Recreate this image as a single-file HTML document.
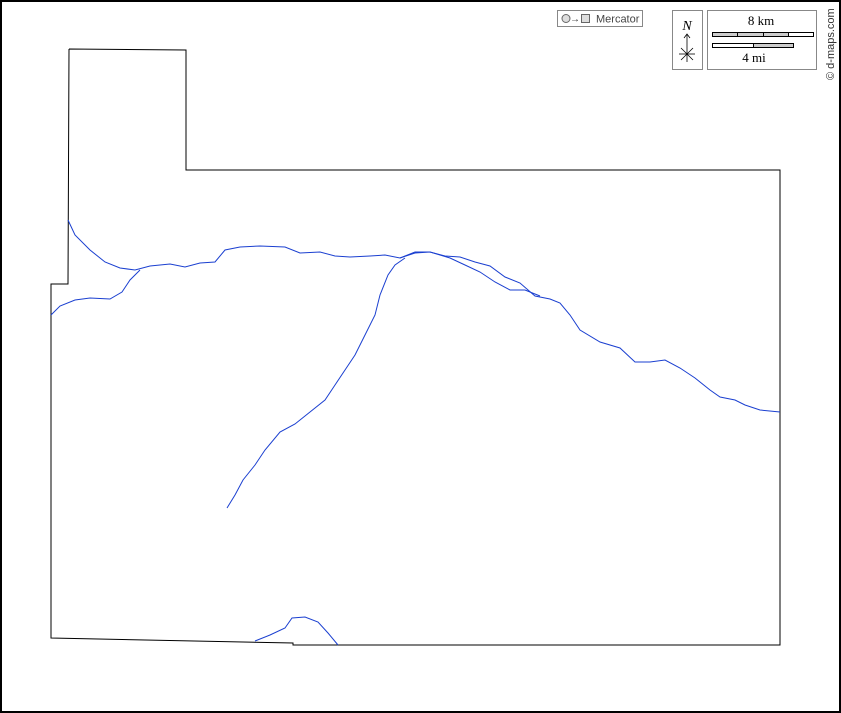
<!DOCTYPE html>
<html><head><style>
html,body{margin:0;padding:0;background:#fff}
#c{position:relative;width:841px;height:713px;overflow:hidden}
</style></head><body><div id="c">
<svg width="841" height="713" viewBox="0 0 841 713" xmlns="http://www.w3.org/2000/svg" style="position:absolute;left:0;top:0">
<rect x="1" y="1" width="839" height="711" fill="#fff" stroke="#000" stroke-width="2"/>
<polyline fill="none" stroke="#000" stroke-width="1" points="69,49 186,50 186,170 780,170 780,645 293,645 293,643 51,638 51,284 68,284 69,49"/>
<g fill="none" stroke="#1a3fd0" stroke-width="1">
<polyline points="68,220 75,235 90,250 105,262 120,268 135,270 150,266 170,264 185,267 200,263 215,262 225,250 240,247 260,246 285,247 300,253 320,252 335,256 350,257 370,256 385,255 400,258 415,253 430,252 445,256 460,257 475,262 490,266 505,277 520,283 535,296 550,299 560,303 570,315 580,330 600,342 620,348 635,362 650,362 665,360 680,368 695,378 710,390 720,397 735,400 745,405 760,410 780,412"/>
<polyline points="51,315 60,306 75,300 90,298 110,299 122,292 130,280 140,270"/>
<polyline points="400,258 415,252 430,252 450,258 465,265 480,272 495,282 510,290 525,290 540,296"/>
<polyline points="227,508 235,495 243,480 255,465 265,450 280,432 295,424 310,412 325,400 335,385 345,370 355,355 365,335 375,315 380,295 388,275 395,265 405,258"/>
<polyline points="255,641 270,635 285,628 292,618 305,617 318,622 328,633 338,645"/>
</g>
<rect x="557.5" y="10.5" width="85" height="16" fill="#fff" stroke="#888"/>
<circle cx="566" cy="18.5" r="4" fill="#ddd" stroke="#666"/>
<text x="570" y="22" font-family="Liberation Sans" font-size="10" fill="#333">→</text>
<rect x="581.5" y="14.5" width="8" height="8" fill="#ddd" stroke="#666"/>
<text x="596" y="22.5" font-family="Liberation Sans, sans-serif" font-size="11" fill="#444">Mercator</text>
<rect x="672.5" y="10.5" width="30" height="59" fill="#fff" stroke="#888"/>
<text x="687" y="30" text-anchor="middle" font-family="Liberation Serif, serif" font-style="italic" font-size="14">N</text>
<g stroke="#000" stroke-width="0.8" fill="none">
<line x1="687" y1="34" x2="687" y2="62"/><polyline points="684,38 687,34 690,38"/>
<line x1="679" y1="54" x2="695" y2="54"/><line x1="681" y1="48" x2="693" y2="60"/><line x1="693" y1="48" x2="681" y2="60"/>
</g>
<rect x="707.5" y="10.5" width="109" height="59" fill="#fff" stroke="#888"/>
<text x="761" y="25" text-anchor="middle" font-family="Liberation Serif, serif" font-size="13">8 km</text>
<g stroke="#000" stroke-width="1">
<rect x="712.5" y="32.5" width="101" height="4" fill="#fff"/>
<rect x="712.5" y="32.5" width="76" height="4" fill="#ccc"/>
<line x1="737.5" y1="32" x2="737.5" y2="37"/>
<line x1="763.5" y1="32" x2="763.5" y2="37"/>
<rect x="712.5" y="43.5" width="81" height="4" fill="#fff"/>
<rect x="753.5" y="43.5" width="40" height="4" fill="#ccc"/>
</g>
<text x="754" y="62" text-anchor="middle" font-family="Liberation Serif, serif" font-size="13">4 mi</text>
<text transform="translate(834,80) rotate(-90)" font-family="Liberation Sans, sans-serif" font-size="11" fill="#333">© d-maps.com</text>
</svg>
</div></body></html>
